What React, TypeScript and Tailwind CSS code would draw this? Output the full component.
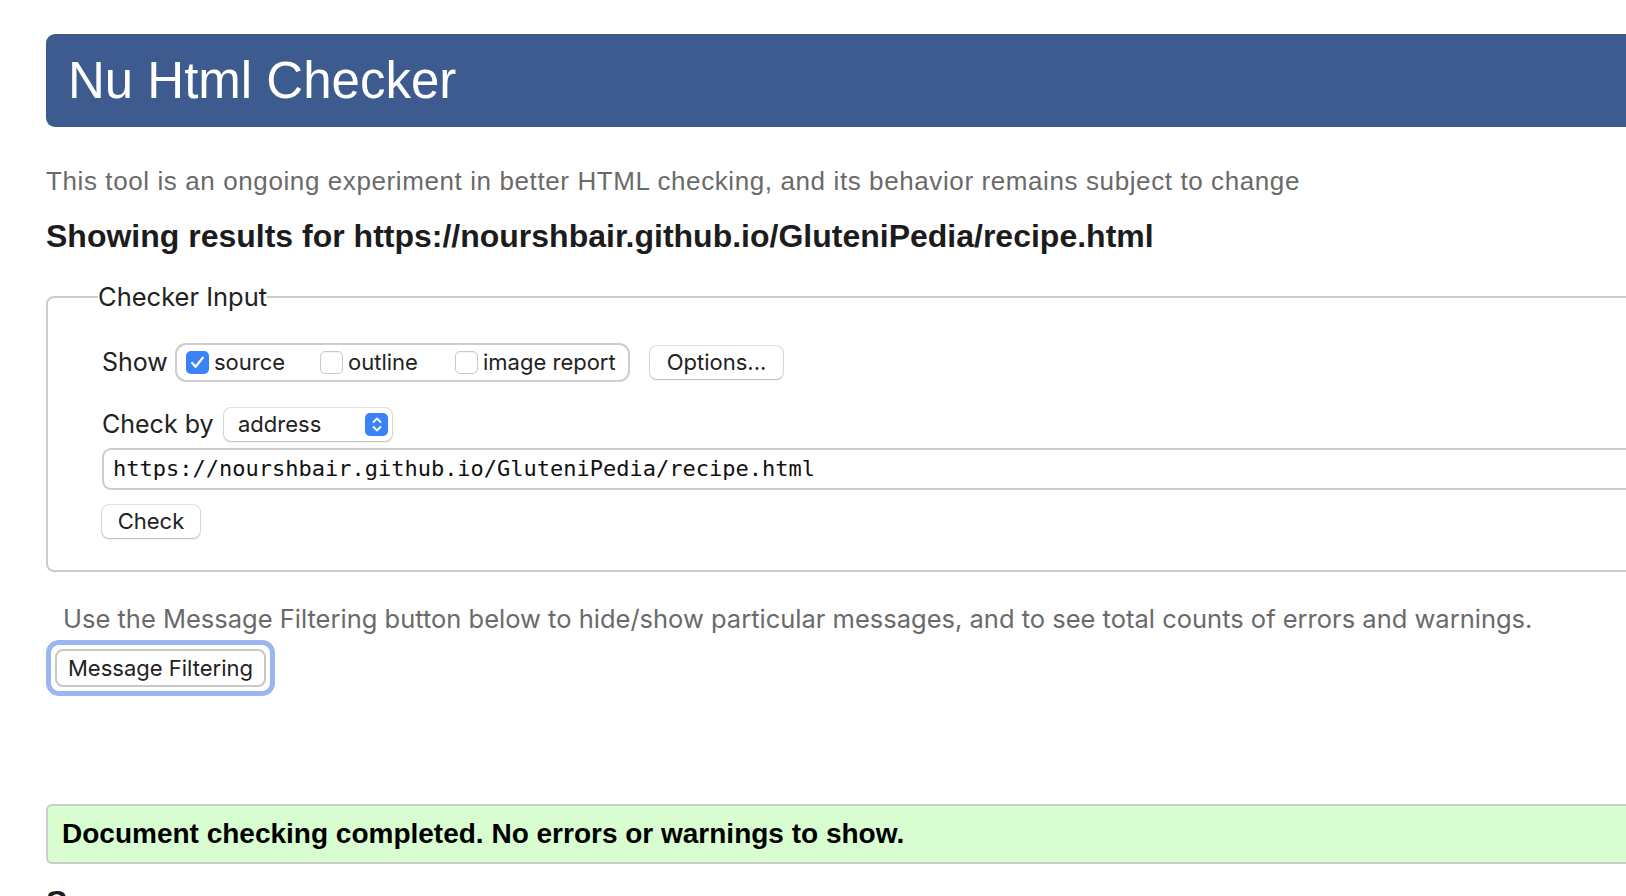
import React from "react";

const ui = { fontFamily: "Inter, 'Noto Sans', sans-serif" };
const helv = { fontFamily: "'Liberation Sans', Arial, sans-serif" };
const mono = { fontFamily: "'DejaVu Sans Mono', 'Liberation Mono', monospace" };

function Box({ checked, label, className }: { checked?: boolean; label: string; className?: string }) {
  return (
    <label className={"flex items-center gap-[5px] " + (className ?? "")}>
      {checked ? (
        <span className="flex h-[23px] w-[23px] items-center justify-center rounded-[5px] bg-[#3a82f7]">
          <svg width="17" height="17" viewBox="0 0 16 16" fill="none">
            <path d="M3 8.5l3.2 3.5L13 3.5" stroke="white" strokeWidth="2.2" strokeLinecap="round" strokeLinejoin="round" />
          </svg>
        </span>
      ) : (
        <span className="h-[23px] w-[23px] rounded-[5px] border border-[#c9c9c9] bg-white shadow-[inset_0_1px_1px_rgba(0,0,0,0.05)]" />
      )}
      <span>{label}</span>
    </label>
  );
}

function MacButton({ children, className }: { children: React.ReactNode; className?: string }) {
  return (
    <button
      className={
        "rounded-[7px] bg-white text-[#222] shadow-[0_0_0_1px_rgba(0,0,0,0.12),0_1px_2px_rgba(0,0,0,0.18)] " +
        (className ?? "")
      }
    >
      {children}
    </button>
  );
}

export default function App() {
  return (
    <div className="h-[896px] w-[1626px] overflow-hidden bg-white">
      <div className="w-[1900px] pl-[46px] pt-[34px]">
        <div className="flex h-[93px] items-center rounded-l-[9px] bg-[#3d5b8f] pl-[22px]">
          <h1 className="text-[51px] leading-none text-white" style={helv}>
            Nu Html Checker
          </h1>
        </div>

        <p className="mt-[39px] text-[26px] leading-[30px] tracking-[0.6px] text-[#6a6a6a]" style={helv}>
          This tool is an ongoing experiment in better HTML checking, and its behavior remains subject to change
        </p>

        <h2 className="mt-[22px] text-[32px] font-bold leading-[36px] text-[#1c1c1c]" style={helv}>
          Showing results for https://nourshbair.github.io/GluteniPedia/recipe.html
        </h2>

        <fieldset className="mt-[28px] rounded-[8px] border-2 border-[#cccccc] pb-[31px] pl-[50px]" style={ui}>
          <legend className="text-[25.5px] leading-[30px] text-[#222]">Checker Input</legend>

          <div className="pl-[4px] text-[25px] text-[#222]">
            <div className="mt-[31px] flex items-center">
              <span className="w-[73px]">Show</span>
              <div className="flex h-[39px] w-[455px] items-center rounded-[11px] border-2 border-[#cdcdcd] pl-[9px] text-[22px]">
                <Box checked label="source" className="w-[134px]" />
                <Box label="outline" className="w-[135px]" />
                <Box label="image report" />
              </div>
              <MacButton className="ml-[20px] h-[33px] w-[133px] text-[22px]">Options...</MacButton>
            </div>

            <div className="mt-[24px] flex items-center">
              <span className="w-[122px]">Check by</span>
              <div className="flex h-[33px] w-[168px] items-center justify-between rounded-[7px] bg-white pl-[14px] pr-[4px] text-[22px] shadow-[0_0_0_1px_rgba(0,0,0,0.12),0_1px_2px_rgba(0,0,0,0.18)]">
                <span>address</span>
                <span className="flex h-[23px] w-[23px] items-center justify-center rounded-[5px] bg-[#3a82f7]">
                  <svg width="12" height="17" viewBox="0 0 12 17" fill="none">
                    <path d="M2.5 6L6 2.5 9.5 6M2.5 11L6 14.5 9.5 11" stroke="white" strokeWidth="1.8" strokeLinecap="round" strokeLinejoin="round" />
                  </svg>
                </span>
              </div>
            </div>

            <div
              className="mt-[4px] flex h-[42px] items-center rounded-l-[9px] border-2 border-r-0 border-[#cccccc] pl-[9px] text-[22px] text-[#111]"
              style={mono}
            >
              https://nourshbair.github.io/GluteniPedia/recipe.html
            </div>

            <MacButton className="mt-[15px] h-[33px] w-[98px] text-[22px]">Check</MacButton>
          </div>
        </fieldset>

        <p className="mt-[32px] pl-[17px] text-[25.5px] leading-[30px] text-[#6a6a6a]" style={ui}>
          Use the Message Filtering button below to hide/show particular messages, and to see total counts of errors and warnings.
        </p>

        <div className="mt-[6px] inline-flex rounded-[13px] border-[5px] border-[#99b6f3] p-[4px]" style={ui}>
          <button className="h-[38px] rounded-[8px] border-2 border-[#c8c8c8] bg-white px-[11px] text-[22px] text-[#222]">
            Message Filtering
          </button>
        </div>

        <div className="mt-[108px] flex h-[60px] items-center rounded-l-[6px] border-2 border-r-0 border-[#cccccc] bg-[#d8fdd0] pl-[14px]">
          <span className="text-[28px] font-bold text-black" style={helv}>
            Document checking completed. No errors or warnings to show.
          </span>
        </div>

        <h2 className="mt-[20px] text-[32px] font-bold leading-[36px] text-[#1c1c1c]" style={helv}>
          Source
        </h2>
      </div>
    </div>
  );
}
